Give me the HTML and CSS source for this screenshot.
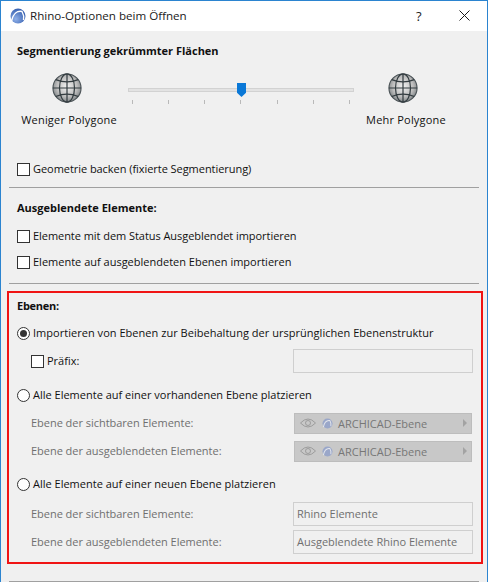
FILE: index.html
```html
<!DOCTYPE html>
<html lang="de">
<head>
<meta charset="utf-8">
<title>Rhino-Optionen beim Öffnen</title>
<link rel="stylesheet" href="styles.css">
</head>
<body>
<svg class="defs" width="0" height="0" aria-hidden="true">
  <defs>
    <radialGradient id="gl" cx="50%" cy="45%" r="60%">
      <stop offset="0" stop-color="#f2f2f2"/><stop offset="0.6" stop-color="#bdbdbd"/><stop offset="1" stop-color="#6f7578"/>
    </radialGradient>
    <radialGradient id="rh" cx="35%" cy="70%" r="80%">
      <stop offset="0" stop-color="#8fb0e8"/><stop offset="1" stop-color="#2a55a8"/>
    </radialGradient>
    <symbol id="globe" viewBox="0 0 32 32">
      <circle cx="16" cy="16" r="15" fill="url(#gl)" stroke="#4a5256" stroke-width="1.2"/>
      <g fill="none" stroke="#333c40" stroke-width="1.3">
        <ellipse cx="16" cy="16" rx="8" ry="15"/>
        <path d="M16 1V31M1 16H31"/>
        <path d="M4 7Q16 12 28 7M4 25Q16 20 28 25"/>
      </g>
    </symbol>
    <symbol id="rhino" viewBox="0 0 16 16">
      <circle cx="8" cy="8" r="7.5" fill="url(#rh)"/>
      <path d="M1.500 13C3 6 7 2.500 12 3.500 13.500 6 14 9 13.500 12" fill="none" stroke="#fff" stroke-width="1.4"/>
    </symbol>
    <symbol id="layer" viewBox="0 0 12 12">
      <circle cx="6" cy="6" r="5.5" fill="#9aa7c9"/>
      <path d="M1.500 10C2.500 5 5 2.300 8.500 2.800 9.700 4.500 10 7 9.700 9" fill="none" stroke="#e4e6ec" stroke-width="1.1"/>
    </symbol>
    <symbol id="eye" viewBox="0 0 16 10">
      <path d="M.5 5Q8-3 15.500 5 8 13 .5 5Z" fill="none" stroke="#9c9c9c"/>
      <circle cx="8" cy="5" r="2.500" fill="none" stroke="#9c9c9c"/>
    </symbol>
  </defs>
</svg>
<div class="window">
  <header class="titlebar">
    <svg class="app-icon"><use href="#rhino"/></svg>
    <span class="title">Rhino-Optionen beim Öffnen</span>
    <span class="help">?</span>
    <svg class="close" viewBox="0 0 11 11"><path d="M.5 .5L10.500 10.500M10.500 .5L.5 10.500" stroke="#1a1a1a" fill="none"/></svg>
  </header>
  <main class="content">
    <section class="seg">
      <h2 class="heading seg-heading">Segmentierung gekrümmter Flächen</h2>
      <div class="slider-row">
        <div class="globe-col less">
          <svg class="globe"><use href="#globe"/></svg>
          <span class="text wide">Weniger Polygone</span>
        </div>
        <div class="slider">
          <div class="track"><span class="thumb"></span></div>
          <div class="ticks"><i></i><i></i><i></i><i></i><i></i><i></i><i></i></div>
        </div>
        <div class="globe-col more">
          <svg class="globe"><use href="#globe"/></svg>
          <span class="text wide">Mehr Polygone</span>
        </div>
      </div>
      <label class="row bake"><span class="check"></span><span class="text tight">Geometrie backen (fixierte Segmentierung)</span></label>
    </section>
    <hr class="divider">
    <section class="hidden-sec">
      <h2 class="heading">Ausgeblendete Elemente:</h2>
      <label class="row first"><span class="check"></span><span class="text tight">Elemente mit dem Status Ausgeblendet importieren</span></label>
      <label class="row second"><span class="check"></span><span class="text">Elemente auf ausgeblendeten Ebenen importieren</span></label>
    </section>
    <hr class="divider">
    <section class="layers">
      <h2 class="heading layers-heading">Ebenen:</h2>
      <label class="row opt-1"><span class="radio on"></span><span class="text slight">Importieren von Ebenen zur Beibehaltung der ursprünglichen Ebenenstruktur</span></label>
      <div class="sub prefix">
        <label class="row"><span class="check"></span><span class="text">Präfix:</span></label>
        <span class="field"></span>
      </div>
      <label class="row opt-2"><span class="radio"></span><span class="text">Alle Elemente auf einer vorhandenen Ebene platzieren</span></label>
      <div class="sub sub-a">
        <span class="text muted">Ebene der sichtbaren Elemente:</span>
        <span class="dropdown"><svg class="eye"><use href="#eye"/></svg><svg class="layer"><use href="#layer"/></svg><span class="dd-text">ARCHICAD-Ebene</span><span class="arrow"></span></span>
      </div>
      <div class="sub sub-b">
        <span class="text muted">Ebene der ausgeblendeten Elemente:</span>
        <span class="dropdown"><svg class="eye"><use href="#eye"/></svg><svg class="layer"><use href="#layer"/></svg><span class="dd-text">ARCHICAD-Ebene</span><span class="arrow"></span></span>
      </div>
      <label class="row opt-3"><span class="radio"></span><span class="text">Alle Elemente auf einer neuen Ebene platzieren</span></label>
      <div class="sub sub-c">
        <span class="text muted">Ebene der sichtbaren Elemente:</span>
        <span class="field">Rhino Elemente</span>
      </div>
      <div class="sub sub-d">
        <span class="text muted">Ebene der ausgeblendeten Elemente:</span>
        <span class="field">Ausgeblendete Rhino Elemente</span>
      </div>
    </section>
    <hr class="divider bottom">
  </main>
</div>
</body>
</html>
```
FILE: styles.css
```css
* { box-sizing: border-box; }
html, body { margin: 0; padding: 0; }
body { width: 488px; height: 582px; overflow: hidden; font-family: "Open Sans", sans-serif; font-size: 11px; color: #111; }
.defs { position: absolute; }
.window { width: 488px; height: 582px; border: 1px solid #2b84d0; border-bottom: 0; background: #f0f0f0; display: flex; flex-direction: column; }
.titlebar { height: 30px; background: #fff; display: flex; align-items: center; padding-left: 9px; flex: none; }
.app-icon { width: 16px; height: 16px; margin-right: 4px; }
.title { font-size: 11.6px; color: #222; flex: 1; padding-bottom: 1px; }
.help { font-size: 13px; width: 7px; margin-right: 36px; color: #222; padding-bottom: 1px; }
.close { width: 11px; height: 11px; margin-right: 17px; margin-bottom: 1px; }
.content { flex: 1; display: flex; flex-direction: column; }
.heading { margin: 0; font-size: 11px; font-weight: 700; line-height: 16px; color: #111; }
.layers-heading { letter-spacing: -.25px; }
.text { line-height: 16px; white-space: nowrap; }
.wide { letter-spacing: .2px; }
.tight { letter-spacing: -.05px; }
.slight { letter-spacing: .03px; }
.muted { color: #6f6f6f; letter-spacing: -.03px; }
.seg { height: 156px; padding: 12px 0 0 16px; }
.slider-row { display: flex; height: 69px; margin-top: 14px; }
.globe-col { display: flex; flex-direction: column; align-items: center; width: 96px; }
.globe { width: 30px; height: 30px; margin-bottom: 9px; }
.less { margin-left: 5px; margin-right: 12px; width: 94px; }
.less .globe { margin-right: 5px; }
.more { margin-left: 4px; width: 96px; }
.more .globe { margin-right: 6px; }
.slider { width: 226px; padding-top: 15px; }
.track { height: 4px; width: 226px; background: #e3e3e3; border: 1px solid #d2d2d2; position: relative; }
.thumb { position: absolute; left: 108px; top: -6px; width: 9px; height: 14px; background: #0a78d7; clip-path: polygon(0 0,100% 0,100% 70%,50% 100%,0 70%); }
.ticks { display: flex; justify-content: space-between; padding: 0 4px; margin-top: 8px; }
.ticks i { width: 1px; height: 4px; background: #b9b9b9; }
.row { display: flex; align-items: center; }
.check { width: 13px; height: 13px; border: 1px solid #333; background: #fff; margin-right: 3px; flex: none; }
.radio { width: 13px; height: 13px; border: 1px solid #333; border-radius: 50%; background: #fff; margin-right: 3px; flex: none; display: flex; align-items: center; justify-content: center; }
.radio.on::after { content: ""; width: 7px; height: 7px; border-radius: 50%; background: #333; }
.bake { margin-top: 19px; }
.divider { height: 1px; margin: 0 8px; border: 0; background: #a0a0a0; flex: none; }
.hidden-sec { height: 95px; padding: 12px 0 0 16px; }
.first { margin-top: 12px; }
.second { margin-top: 10px; }
.layers { width: 476px; height: 273px; margin: 7px 0 0 6px; border: 2px solid #f01414; padding: 5px 0 0 8px; }
.opt-1 { margin-top: 11px; }
.sub { display: flex; align-items: center; justify-content: space-between; padding-right: 8px; padding-left: 14px; }
.prefix { height: 24px; margin-top: 8px; }
.opt-2 { margin-top: 14px; }
.sub-a { height: 22px; margin-top: 9px; }
.sub-b { height: 22px; margin-top: 6px; }
.opt-3 { margin-top: 14px; }
.sub-c { height: 24px; margin-top: 10px; }
.sub-d { height: 24px; margin-top: 4px; }
.field { width: 180px; height: 24px; border: 1px solid #cfcfcf; background: #f0f0f0; padding: 0 3px; line-height: 22px; color: #6f6f6f; }
.dropdown { width: 178px; height: 21px; margin-right: 1px; background: #c8c8c8; border: 1px solid #bdbdbd; display: flex; align-items: center; padding-left: 5px; color: #777; }
.eye { width: 16px; height: 10px; margin-right: 6px; }
.layer { width: 11px; height: 11px; margin-right: 5px; }
.dd-text { flex: 1; }
.arrow { width: 0; height: 0; border-left: 4px solid #a3a3a3; border-top: 4px solid transparent; border-bottom: 4px solid transparent; margin-right: 4px; }
.bottom { margin-top: 17px; }
```
